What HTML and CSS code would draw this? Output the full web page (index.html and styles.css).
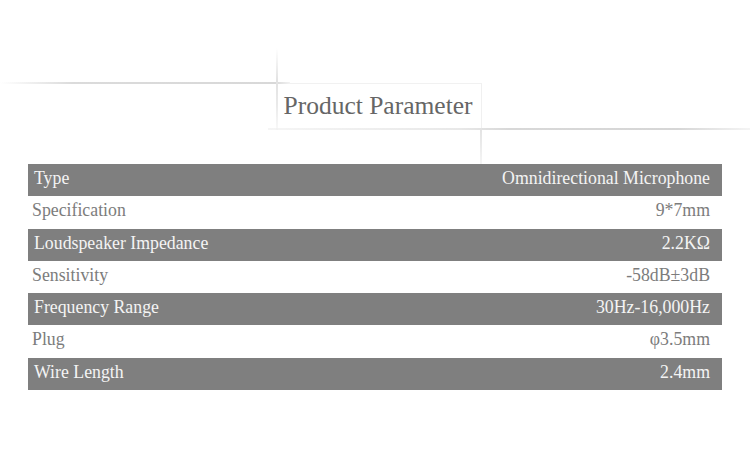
FILE: index.html
```html
<!DOCTYPE html>
<html>
<head>
<meta charset="utf-8">
<link rel="stylesheet" href="styles.css">
</head>
<body>
<div class="page">
  <header class="head">
    <span class="ln top-ext"></span>
    <span class="ln top-in"></span>
    <span class="ln left-ext"></span>
    <span class="ln bottom-ext"></span>
    <span class="ln right-ext"></span>
    <span class="ln right-in"></span>
    <h1 class="title">Product Parameter</h1>
  </header>
  <div class="table">
    <div class="row dark"><span>Type</span><span>Omnidirectional Microphone</span></div>
    <div class="row light"><span>Specification</span><span>9*7mm</span></div>
    <div class="row dark"><span>Loudspeaker Impedance</span><span>2.2KΩ</span></div>
    <div class="row light"><span>Sensitivity</span><span>-58dB±3dB</span></div>
    <div class="row dark"><span>Frequency Range</span><span>30Hz-16,000Hz</span></div>
    <div class="row light"><span>Plug</span><span>φ3.5mm</span></div>
    <div class="row dark"><span>Wire Length</span><span>2.4mm</span></div>
  </div>
</div>
</body>
</html>
```
FILE: styles.css
```css
html, body {
  margin: 0;
  padding: 0;
  background: #fff;
}
.page {
  width: 750px;
  height: 462px;
  font-family: "Liberation Serif", "Times New Roman", serif;
}
.head {
  position: relative;
  height: 164px;
  display: flex;
  justify-content: center;
}
.title {
  margin: 0;
  padding-top: 91px;
  padding-left: 6px;
  font-family: "Liberation Serif", "Times New Roman", serif;
  font-weight: normal;
  font-size: 25.5px;
  line-height: 30px;
  color: #666;
}
.ln {
  position: absolute;
  display: block;
}
.top-ext {
  left: 0;
  top: 82px;
  width: 290px;
  height: 2px;
  background: linear-gradient(to right, rgba(215,215,215,0) 0%, rgba(215,215,215,0.9) 25%, #d8d8d8 95%, rgba(230,230,230,0.5) 100%);
}
.top-in {
  left: 290px;
  top: 83px;
  width: 192px;
  height: 1px;
  background: #f1f1f1;
}
.left-ext {
  left: 276px;
  top: 48px;
  width: 2px;
  height: 82px;
  background: linear-gradient(to bottom, rgba(220,220,220,0) 0%, #e2e2e2 40%, #eaeaea 70%, rgba(240,240,240,0.4) 100%);
}
.bottom-ext {
  left: 268px;
  top: 128px;
  width: 482px;
  height: 2px;
  background: linear-gradient(to right, rgba(235,235,235,0.5) 0%, #e8e8e8 40%, #d8d8d8 50%, #d6d6d6 85%, rgba(220,220,220,0.3) 100%);
}
.right-in {
  left: 481px;
  top: 84px;
  width: 1px;
  height: 44px;
  background: #f0f0f0;
}
.right-ext {
  left: 480px;
  top: 128px;
  width: 2px;
  height: 36px;
  background: linear-gradient(to bottom, #e2e2e2 0%, rgba(235,235,235,0.5) 100%);
}
.table {
  margin: 0 28px;
  display: flex;
  flex-direction: column;
}
.row {
  height: 32.3px;
  box-sizing: border-box;
  display: flex;
  justify-content: space-between;
  align-items: flex-start;
  padding: 0 12px 0 6px;
  font-size: 17.8px;
  line-height: 28px;
}
.row.dark {
  background: #7f7f7f;
  color: #f4f4f4;
}
.row.light {
  background: #fff;
  color: #7c7c7c;
  padding-left: 4px;
}
```
